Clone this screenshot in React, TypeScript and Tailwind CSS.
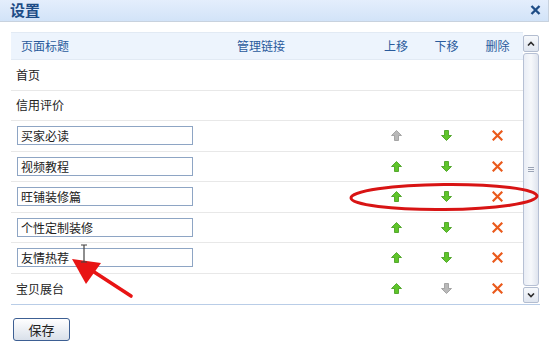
import React from 'react';

const FONT = { fontFamily: '"Noto Sans CJK SC", "Liberation Sans", sans-serif' };

type Row = {
  title: string;
  editable: boolean;
  up: 'on' | 'off' | null;
  down: 'on' | 'off' | null;
  del: boolean;
};

const rows: Row[] = [
  { title: '首页', editable: false, up: null, down: null, del: false },
  { title: '信用评价', editable: false, up: null, down: null, del: false },
  { title: '买家必读', editable: true, up: 'off', down: 'on', del: true },
  { title: '视频教程', editable: true, up: 'on', down: 'on', del: true },
  { title: '旺铺装修篇', editable: true, up: 'on', down: 'on', del: true },
  { title: '个性定制装修', editable: true, up: 'on', down: 'on', del: true },
  { title: '友情热荐', editable: true, up: 'on', down: 'on', del: true },
  { title: '宝贝展台', editable: false, up: 'on', down: 'off', del: true },
];

const Arrow: React.FC<{ dir: 'up' | 'down'; on: boolean }> = ({ dir, on }) => {
  const fill = on ? '#5fc52a' : '#b9b9b9';
  const stroke = on ? '#3f9a17' : '#979797';
  return (
    <svg width="11" height="11" viewBox="0 0 11 11" className={dir === 'down' ? 'rotate-180' : ''}>
      <polygon
        points="5.5,0.5 10.5,5.5 7.5,5.5 7.5,10.5 3.5,10.5 3.5,5.5 0.5,5.5"
        fill={fill}
        stroke={stroke}
        strokeWidth="0.8"
        strokeLinejoin="round"
      />
    </svg>
  );
};

const DeleteIcon: React.FC = () => (
  <svg width="11" height="11" viewBox="0 0 11 11">
    <path d="M1.5 1.5 L9.5 9.5 M9.5 1.5 L1.5 9.5" stroke="#ea5a1c" strokeWidth="2.2" strokeLinecap="square" />
  </svg>
);

const Scrollbar: React.FC = () => (
  <div className="w-[16px] flex flex-col">
    <div className="h-[17px] mt-[3px] border border-[#b3bdd0] rounded-[2px] bg-gradient-to-b from-[#f7f9fc] to-[#dfe5ef] flex items-center justify-center">
      <svg width="8" height="5" viewBox="0 0 8 5">
        <path d="M1 4.5 L4 1.5 L7 4.5" stroke="#2b2b2b" strokeWidth="1.6" fill="none" />
      </svg>
    </div>
    <div className="flex-1 border border-[#b6c0d4] rounded-[3px] bg-gradient-to-r from-[#e9edf5] via-[#f6f8fb] to-[#dfe4ee] flex items-center justify-center my-[1px]">
      <div className="flex flex-col gap-[1px]">
        <div className="w-[6px] h-[1px] bg-[#9aa3b5]" />
        <div className="w-[6px] h-[1px] bg-[#9aa3b5]" />
        <div className="w-[6px] h-[1px] bg-[#9aa3b5]" />
      </div>
    </div>
    <div className="h-[16px] mb-[1px] border border-[#b3bdd0] rounded-[2px] bg-gradient-to-b from-[#f7f9fc] to-[#dfe5ef] flex items-center justify-center">
      <svg width="8" height="5" viewBox="0 0 8 5">
        <path d="M1 0.5 L4 3.5 L7 0.5" stroke="#2b2b2b" strokeWidth="1.6" fill="none" />
      </svg>
    </div>
  </div>
);

export default function App() {
  return (
    <div className="relative w-[551px] h-[347px] bg-white overflow-hidden text-[12px] text-[#222]" style={FONT}>
      {/* Title bar */}
      <div className="h-[22px] mr-[2px] border-r border-[#c8d2de] bg-gradient-to-b from-[#e4eefc] to-[#d2e3f8] border-b border-[#b3c9e6] flex items-center justify-between pl-[10px] pr-[7px]">
        <span className="text-[15px] font-bold text-[#1d4c86] leading-none -mt-[3px]">设置</span>
        <svg width="11" height="10" viewBox="0 0 11 10" className="-mt-[2px]">
          <path d="M1.5 1 L9.5 9 M9.5 1 L1.5 9" stroke="#1f4d86" strokeWidth="2.4" />
        </svg>
      </div>

      <div className="pl-[11px] pt-[10px]">
        <div className="flex w-[529px] border-b border-[#b9cde7]">
          {/* Table */}
          <div className="w-[512px]">
            <div className="h-[28px] grid grid-cols-[226px_134px_50px_51px_51px] items-center bg-[#edf4fd] border-t border-[#c7daf2] border-b border-[#e2eaf4] text-[#2a5b9c]">
              <span className="pl-[10px]">页面标题</span>
              <span>管理链接</span>
              <span className="text-center">上移</span>
              <span className="text-center">下移</span>
              <span className="text-center">删除</span>
            </div>
            {rows.map((r, i) => (
              <div
                key={r.title}
                className={`h-[30.5px] grid grid-cols-[226px_134px_50px_51px_51px] items-center ${
                  i < rows.length - 1 ? 'border-b border-[#e8e8e8]' : ''
                }`}
              >
                {r.editable ? (
                  <div className="pl-[6px]">
                    <input
                      defaultValue={r.title}
                      readOnly
                      className="w-[176px] h-[19px] border border-[#8ea5c4] pl-[3px] text-[12px] text-[#222] outline-none"
                      style={FONT}
                    />
                  </div>
                ) : (
                  <span className="pl-[5px]">{r.title}</span>
                )}
                <span />
                <span className="flex justify-center">{r.up && <Arrow dir="up" on={r.up === 'on'} />}</span>
                <span className="flex justify-center">{r.down && <Arrow dir="down" on={r.down === 'on'} />}</span>
                <span className="flex justify-center">{r.del && <DeleteIcon />}</span>
              </div>
            ))}
          </div>
          <Scrollbar />
        </div>

        <button
          className="mt-[13px] ml-[2px] w-[57px] h-[23px] border border-[#3d5f93] rounded-[3px] bg-gradient-to-b from-[#ffffff] to-[#d9e0ea] text-[13px] text-[#222] flex items-center justify-center"
          style={FONT}
        >
          保存
        </button>
      </div>

      {/* annotation overlay: red ellipse, arrow and text cursor */}
      <svg className="absolute left-0 top-0 pointer-events-none" width="551" height="347" viewBox="0 0 551 347">
        <ellipse cx="444" cy="197" rx="93" ry="12.5" fill="none" stroke="#d81414" strokeWidth="3" transform="rotate(-0.6 444 197)" />
        <line x1="131" y1="296" x2="88" y2="268" stroke="#e81414" strokeWidth="3.6" strokeLinecap="round" />
        <polygon points="72,259 101,263 86,284" fill="#e81414" />
        <path d="M81 245 H87 M84 245 V262 M81 262 H87" stroke="#444" strokeWidth="1.2" fill="none" />
      </svg>
    </div>
  );
}
